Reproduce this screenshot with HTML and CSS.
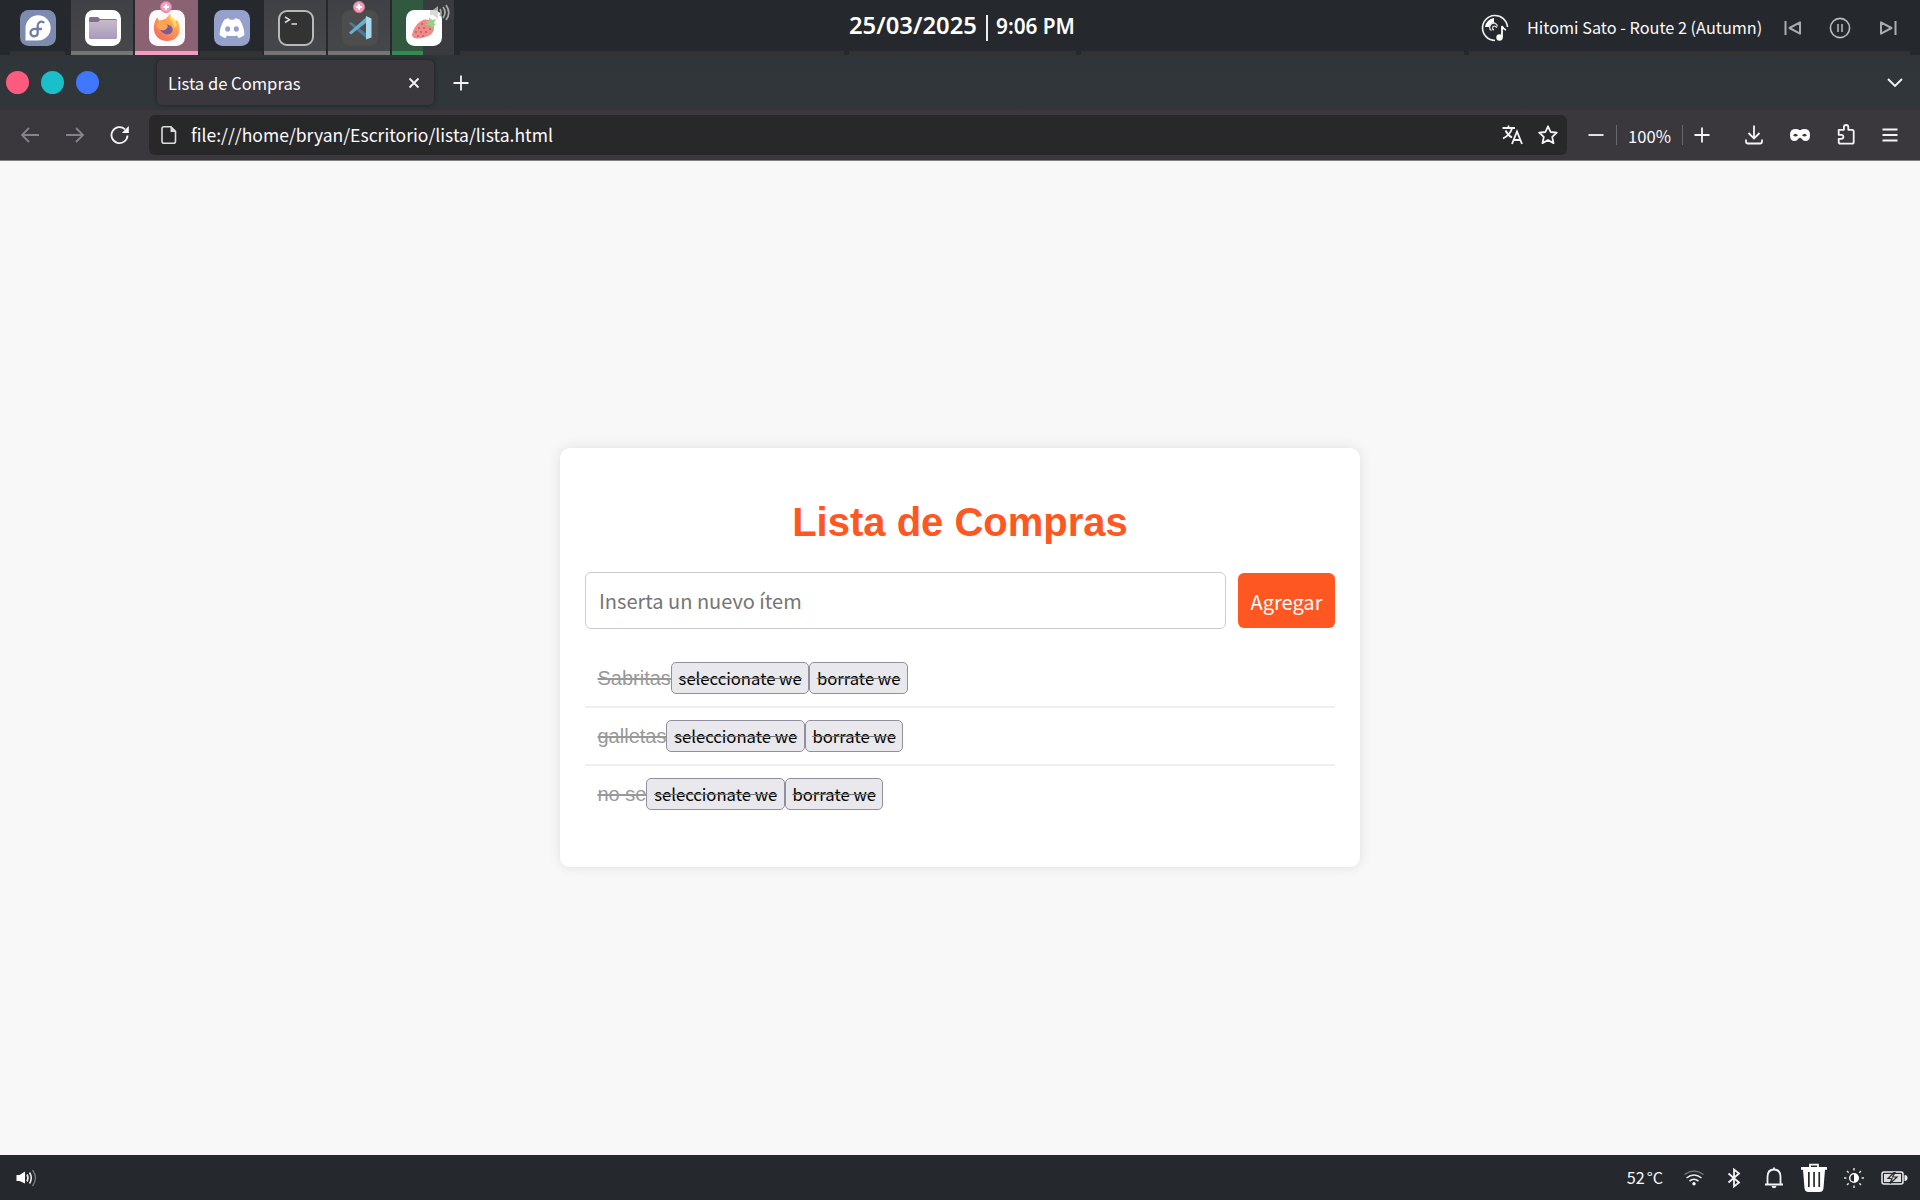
FILE: index.html
```html
<!DOCTYPE html>
<html lang="es">
<head>
<meta charset="utf-8">
<title>Lista de Compras</title>
<link rel="stylesheet" href="styles.css">
</head>
<body>
<header class="panel">
  <div class="tasks">
    <div class="task launcher">
      <svg width="36" height="36" viewBox="0 0 36 36"><rect width="36" height="36" rx="8.5" fill="#7e8bb0"/><path d="M5.5 30.5V17.8A12.6 12.6 0 1 1 18.2 30.5Z" fill="#fff"/><path d="M23.5 12.2c-3.500-1.500-5.800.6-5.800 3.800v6.200c0 5.600-7.200 5-7.200.6 0-2.900 2.600-4 5-3.800h5.500" fill="none" stroke="#707da5" stroke-width="2.300" stroke-linecap="round"/></svg>
    </div>
    <div class="task open">
      <svg width="36" height="36" viewBox="0 0 36 36"><defs><linearGradient id="fold" x2="0" y2="1"><stop stop-color="#c8bac9"/><stop offset="1" stop-color="#a99abd"/></linearGradient></defs><rect width="36" height="36" rx="8.500" fill="#fff"/><path d="M4 8.500Q4 7 5.500 7H13l2 2h15.500Q32 9 32 10.500v4H4z" fill="#826f8b"/><path d="M4 12h9l2-2h15.500Q32 10 32 11.500v16q0 1.500-1.500 1.500h-25Q4 29 4 27.500z" fill="url(#fold)"/></svg>
    </div>
    <div class="task open active">
      <i class="badge"></i>
      <svg width="36" height="36" viewBox="0 0 36 36"><defs><linearGradient id="fox" x1="1" x2=".3" y2="1"><stop stop-color="#ffd75c"/><stop offset=".5" stop-color="#fb9a51"/><stop offset="1" stop-color="#f36e62"/></linearGradient></defs><rect width="36" height="36" rx="8.500" fill="#fafafa"/><path d="M8 7.500l2.500 3.500 4-1.500 2.500-1 4-5 2 6 2.500 2 2.500-1.500c2 3 3 6.500 2.500 10.500C30 27 24.500 31 18 31 10.500 31 5 25.500 4.800 18.500 4.700 13.500 6.500 10 8 7.500z" fill="url(#fox)"/><path d="M12 16.500c3-3.500 10-2.500 11.500 2 .9 5-4.500 7.500-8.500 5-2-1.200-3-2.300-3.500-3.500l5-.5 2-2.300z" fill="#775b9d"/><path d="M8 13l4-3 5 3.500 2 3-3 3.500c-4 1-6-1-8-3z" fill="#fba451"/><path d="M21 4c-3 4 4 7 4 14l3-3-2-5-4-3z" fill="#ffd65a"/></svg>
    </div>
    <div class="task pinned">
      <svg width="36" height="36" viewBox="0 0 36 36"><rect width="36" height="36" rx="8.500" fill="#95a1cb"/><path d="M10.500 9.500q2-.9 4.500-1.200l1 1.500h4l1-1.500q2.500.3 4.500 1.200Q30 16 30.500 25q-3 2.500-6 3l-1.500-2.600q-5 1.200-10 0L11.500 28q-3-.5-6-3Q6 16 10.500 9.500z" fill="#fff"/><ellipse cx="13.700" cy="19" rx="2.500" ry="2.800" fill="#95a1cb"/><ellipse cx="22.300" cy="19" rx="2.500" ry="2.800" fill="#95a1cb"/></svg>
    </div>
    <div class="task open">
      <svg width="36" height="36" viewBox="0 0 36 36"><rect x="1" y="1" width="34" height="34" rx="8" fill="#333" stroke="#b9b9b9" stroke-width="2"/><path d="M7 7l4.500 2.700L7 12.500M13.500 14H19" fill="none" stroke="#ddd" stroke-width="1.500"/></svg>
    </div>
    <div class="task open">
      <i class="badge"></i>
      <svg width="36" height="36" viewBox="0 0 36 36"><rect width="36" height="36" rx="8.500" fill="#4d4d4d"/><path d="M7 13.500l2-1.500L25 24v5z" fill="#477c9b"/><path d="M7 22.500L9 24.500 25 12V6.500z" fill="#6badd0"/><path d="M24 6l5.500 2.500v19L24 29.500z" fill="#a9d8ee"/></svg>
    </div>
    <div class="task media">
      <svg width="36" height="36" viewBox="0 0 36 36"><rect width="36" height="36" rx="8.500" fill="#fff"/><path d="M6 25c1-6 5-12 10-14.500 5-2.500 11 .5 12 6 .8 6-4 9.500-10 11-5 1.200-11.500 2-12-2.500z" fill="#ee8b88"/><path d="M20 11l3 .5 0-4 3 2.500 4-1-2 4 2 2-3 .5 0 4-3-4-5-1 3-1z" fill="#97cf8b"/><g fill="#8e424d"><circle cx="16" cy="14" r=".8"/><circle cx="13" cy="18" r=".8"/><circle cx="18" cy="18" r=".8"/><circle cx="10" cy="22" r=".8"/><circle cx="15" cy="22" r=".8"/><circle cx="20" cy="22" r=".8"/><circle cx="24" cy="19" r=".8"/><circle cx="12" cy="26" r=".8"/><circle cx="17" cy="26" r=".8"/></g></svg>
      <svg class="sound" width="22" height="20" viewBox="0 0 22 20"><path d="M1 7h3l5-4v13l-5-4H1z" fill="#ccc" opacity=".75"/><path d="M11 6q2 3.500 0 7M14 4q4 5.500 0 11M17 2q5.500 8 0 15" fill="none" stroke="#aaa" stroke-width="1.700"/></svg>
    </div>
  </div>
  <div class="spacer first"></div>
  <div class="clock"><span class="date">25/03/2025</span><i></i><span class="time">9:06 PM</span></div>
  <div class="spacer"></div>
  <div class="player">
    <svg class="disc" width="28" height="28" viewBox="0 0 28 28"><path d="M26.500 13A12.500 12.500 0 1 0 14 26.500" fill="none" stroke="#eee" stroke-width="1.700"/><path d="M4 13A10 10 0 0 1 13 4v5.500A5 5 0 0 0 9 13z" fill="#fff"/><path d="M10.500 16.500a4 4 0 1 1 6-4M13 16a2 2 0 1 1 2.500-2" fill="none" stroke="#ddd" stroke-width="1.300"/><circle cx="18.500" cy="23.500" r="3.200" fill="#fff"/><path d="M21 23.500V12q1 3 4 4" fill="none" stroke="#fff" stroke-width="1.800"/></svg>
    <span class="track">Hitomi Sato - Route 2 (Autumn)</span>
    <svg class="prev" width="18" height="16" viewBox="0 0 18 16"><path d="M1.500 1v14M16 2.300v11.400L5.500 8z" class="dimline"/></svg>
    <svg class="pause" width="22" height="22" viewBox="0 0 22 22"><circle cx="11" cy="11" r="9.600" fill="none" stroke="#bbb" stroke-width="1.600"/><path d="M9 7v8M13 7v8" stroke="#aaa" stroke-width="1.700"/></svg>
    <svg class="next" width="18" height="16" viewBox="0 0 18 16"><path d="M16.500 1v14M2 2.300v11.400L12.500 8z" class="dimline"/></svg>
  </div>
</header>

<div class="tabbar">
  <div class="dots"><i class="close"></i><i class="min"></i><i class="max"></i></div>
  <div class="tab"><span>Lista de Compras</span>
    <svg width="12" height="12" viewBox="0 0 12 12"><path d="M1.500 1.500l9 9M10.500 1.500l-9 9" class="line"/></svg></div>
  <svg class="newtab" width="16" height="16" viewBox="0 0 16 16"><path d="M8 .5v15M.5 8h15" class="line"/></svg>
  <svg class="alltabs" width="18" height="12" viewBox="0 0 18 12"><path d="M2 2l7 7 7-7" class="line"/></svg>
</div>

<div class="toolbar">
  <svg class="nav" width="20" height="18" viewBox="0 0 20 18"><path d="M19 9H2M9 2L2 9l7 7" class="line off"/></svg>
  <svg class="nav" width="20" height="18" viewBox="0 0 20 18"><path d="M1 9h17M11 2l7 7-7 7" class="line off"/></svg>
  <svg class="nav" width="20" height="20" viewBox="0 0 20 20"><path d="M17.500 10.500A8 8 0 1 1 15 4.300" class="line"/><path d="M18.800 1v7h-7z" fill="#fbfbfe"/></svg>
  <div class="urlbar">
    <svg width="16" height="20" viewBox="0 0 16 20"><path d="M3 1.800h7l4.500 4.500v10q0 2-2 2h-9.500q-2 0-2-2V3.800q0-2 2-2z" fill="none" stroke="#ddd" stroke-width="1.600"/><path d="M9.500 1v6H15z" fill="#ddd"/></svg>
    <span class="url">file:///home/bryan/Escritorio/lista/lista.html</span>
    <svg class="translate" width="21" height="20" viewBox="0 0 21 20"><path d="M.5 3h12.500M6.500.5V3M10 3.500Q8 10 1 13.500M3.500 5.500Q6 10.500 10 12.500M10 19l5-12.500L20 19M11.800 15h6.400" class="line"/></svg>
    <svg class="star" width="20" height="20" viewBox="0 0 20 20"><path d="M10 1.300l2.600 5.700 6.200.7-4.600 4.200 1.300 6.200-5.500-3.100-5.500 3.100 1.300-6.200L1.200 7.700 7.400 7z" class="line" stroke-linejoin="round"/></svg>
  </div>
  <div class="zoom">
    <svg class="less" width="16" height="16" viewBox="0 0 16 16"><path d="M.5 8h15" class="line"/></svg>
    <span>100%</span>
    <svg class="more" width="16" height="16" viewBox="0 0 16 16"><path d="M8 .5v15M.5 8h15" class="line"/></svg>
  </div>
  <div class="actions">
    <svg width="18" height="20" viewBox="0 0 18 20"><path d="M9 .5v13M3.500 8L9 13.500 14.500 8M1 14.500v2q0 2 2 2h12q2 0 2-2v-2" class="line"/></svg>
    <svg width="20" height="14" viewBox="0 0 20 14"><path fill-rule="evenodd" d="M5 1q3 0 5 1.300Q12 1 15 1q5 0 5 6 0 6-4.500 6-2.500 0-4-2.500Q10 9 8.500 10.500 7 13 4.500 13 0 13 0 7 0 1 5 1zM3 7.300q2.500 2.600 5 0Q5.500 4.300 3 7.300zm9 0q2.500 2.600 5 0-2.500-3-5 0z" fill="#fff"/></svg>
    <svg width="18" height="21" viewBox="0 0 18 21"><path d="M1.700 5.800h5.200V3.300q0-2.300 2.200-2.300t2.200 2.300v2.500h3.700q1.700 0 1.700 1.700v10.500q0 1.700-1.700 1.700H3.400q-1.700 0-1.700-1.700v-3.200h2.500q2.200 0 2.200-2t-2.200-2H1.700z" class="line" stroke-linejoin="round"/></svg>
    <svg width="16" height="14" viewBox="0 0 16 14"><path d="M.5 1.500h15M.5 7h15M.5 12.500h15" class="line"/></svg>
  </div>
</div>

<main class="page">
  <section class="card">
    <h1>Lista de Compras</h1>
    <form class="entry">
      <input type="text" placeholder="Inserta un nuevo ítem">
      <button type="button">Agregar</button>
    </form>
    <ul class="items">
      <li><span>Sabritas</span><button class="select">seleccionate we</button><button class="remove">borrate we</button></li>
      <li><span>galletas</span><button class="select">seleccionate we</button><button class="remove">borrate we</button></li>
      <li><span>no se</span><button class="select">seleccionate we</button><button class="remove">borrate we</button></li>
    </ul>
  </section>
</main>

<footer class="tray">
  <svg class="volume" width="22" height="20" viewBox="0 0 22 20"><path d="M.5 7h3L9 3.500v12L3.500 13h-3z" fill="#fff"/><path d="M11 6.500q2 3.500 0 7M13.500 4.500q3.500 5.500 0 11" fill="none" stroke="#eee" stroke-width="1.600"/><path d="M16.500 2q6 8 0 16" fill="none" stroke="#777" stroke-width="1.400"/></svg>
  <span class="temp">52<span>°</span>C</span>
  <div class="status">
    <div><svg width="22" height="18" viewBox="0 0 22 18"><path d="M1.500 5.500Q11-1.500 20.500 5.500" fill="none" stroke="#777" stroke-width="1.500"/><path d="M3.500 9Q11 3 18.500 9M6.500 12Q11 8.500 15.500 12" fill="none" stroke="#eee" stroke-width="1.600"/><circle cx="11" cy="14.800" r="1.700" fill="#fff"/></svg></div>
    <div><svg width="14" height="20" viewBox="0 0 14 20"><path d="M1.500 5.500l10.500 9L7 18.500v-17l5 4L1.500 14.500" class="line"/></svg></div>
    <div><svg width="20" height="22" viewBox="0 0 20 22"><path d="M1 17.500h18M3.500 17.500V10q0-7.500 6.500-7.500t6.500 7.500v7.500M10 .5v2" class="line"/><path d="M7.500 19h5q-.5 2.300-2.500 2.300T7.500 19z" fill="#eee"/></svg></div>
    <div><svg width="26" height="30" viewBox="0 0 26 30"><path d="M9 5V1.700h8V5" fill="none" stroke="#fff" stroke-width="1.700"/><path fill-rule="evenodd" d="M0 4h26v2.700h-2L22.500 25q-.3 4-4 4h-11q-3.700 0-4-4L2 6.700H0zM7 9v15h1.700V9zm5.200 0v15h1.700V9zm5.200 0v15h1.700V9z" fill="#fff"/></svg></div>
    <div><svg width="20" height="20" viewBox="0 0 20 20"><circle cx="10" cy="10" r="4.300" fill="none" stroke="#eee" stroke-width="1.500"/><path d="M10 5.500a4.500 4.500 0 0 1 0 9z" fill="#fff"/><path d="M10 0v2.500M10 17.500V20M0 10h2.500M17.500 10H20M3 3l1.700 1.700M15.300 15.300L17 17M17 3l-1.700 1.700M4.700 15.300L3 17" stroke="#ddd" stroke-width="1.500"/></svg></div>
    <div><svg width="27" height="16" viewBox="0 0 27 16"><rect x="1" y="2" width="21" height="12" rx="2" fill="none" stroke="#eee" stroke-width="1.500"/><path d="M3 4h17v8H3z" fill="#ddd"/><path d="M23.500 5q3 0 3 3t-3 3z" fill="#eee"/><path d="M13 2.500l-6 6h4l-2 5 7-6.500h-4.500l2.500-4.500z" fill="#eee" stroke="#25282c" stroke-width="1.200"/></svg></div>
  </div>
</footer>
</body>
</html>
```
FILE: styles.css
```css
* { box-sizing: border-box; }
body {
  margin: 0;
  width: 1920px;
  height: 1200px;
  overflow: hidden;
  display: flex;
  flex-direction: column;
  background: #25282c;
  color: #fbfbfe;
  font-family: "Noto Sans CJK SC", "Noto Sans", sans-serif;
}
svg { display: block; flex: none; }
.line { fill: none; stroke: #f4f4f6; stroke-width: 1.8; }
.line.off { stroke: #85848a; }
.dimline { fill: none; stroke: #aaacae; stroke-width: 2; stroke-linejoin: round; }

/* Top panel */
.panel { height: 55px; display: flex; gap: 5px; background: #25282c; flex: none; }
.tasks { display: flex; gap: 2px; width: 455px; }
.task { position: relative; width: 62px; height: 55px; display: flex; justify-content: center; padding: 10px 0 0 2px; }
.launcher { width: 55px; margin: 0 4px 0 10px; padding-left: 0; border-bottom: 4px solid #333; justify-content: flex-end; }
.launcher svg { margin-right: 9px; }
.open { background: linear-gradient(#3f4144, #45474a); border-bottom: 4px solid #757674; }
.active { width: 63px; padding-left: 0; background: #8a6272; border-color: #f19dc0; }
.pinned { width: 62px; border-bottom: 4px solid #333; }
.media { background: linear-gradient(90deg, #31593f 50%, #393b3f 50%); }
.media::after { content: ""; position: absolute; left: 0; bottom: 0; width: 31px; height: 4px; background: #348a53; }
.sound { position: absolute; left: 37px; top: 3px; }
.badge {
  position: absolute; left: 25px; top: 1px; width: 12px; height: 12px; border-radius: 50%;
  border: 1px solid #de799f;
  background: linear-gradient(#fff, #fff) center/2px 6px no-repeat, linear-gradient(#fff, #fff) center/6px 2px no-repeat, #f3a0bf;
}
.spacer { width: 383px; border-bottom: 4px solid #333; }
.spacer.first { width: 384px; }
.clock { width: 227px; border-bottom: 4px solid #333; display: flex; color: #fff; font-family: "Noto Sans", sans-serif; font-weight: 600; white-space: nowrap; }
.date { width: 137px; font-size: 23.8px; line-height: 50px; }
.clock i { width: 2px; height: 26px; margin-top: 15px; background: #eee; }
.time { margin-left: 8px; font-size: 20.8px; line-height: 53px; }
.player { width: 441px; border-bottom: 4px solid #333; display: flex; align-items: center; padding: 4px 0 0 12px; }
.track { width: 257px; margin-left: 18px; padding-bottom: 2px; font-size: 16.27px; line-height: 30px; white-space: nowrap; }
.pause { margin-left: 27px; }
.next { margin-left: 28px; }

/* Browser chrome */
.tabbar { height: 55px; flex: none; background: linear-gradient(#30353a, #30363a); display: flex; align-items: center; }
.dots { display: flex; gap: 12px; padding-left: 6px; width: 157px; }
.dots i { width: 23px; height: 23px; border-radius: 50%; }
.close { background: #ff5b7f; }
.min { background: #1abfc9; }
.max { background: #3f78ff; }
.tab { width: 277px; height: 45px; border-radius: 5px; background: #3a383d; box-shadow: 0 0 4px #1e2124; display: flex; align-items: center; padding: 0 14px 0 11px; font-size: 16.6px; line-height: 30px; }
.tab svg { margin-left: auto; }
.newtab { margin-left: 19px; }
.alltabs { margin-left: auto; margin-right: 16px; }
.toolbar { height: 51px; flex: none; padding: 0 9px 1px 20px; display: flex; align-items: center; background: #3a383d; border-bottom: 1px solid #807f82; }
.nav { margin-right: 25px; }
.nav + .nav + .nav { margin-right: 19px; }
.urlbar { width: 1418px; height: 40px; border-radius: 6px; background: #28282a; display: flex; align-items: center; padding-left: 12px; }
.url { margin-left: 14px; font-size: 17.55px; line-height: 36px; }
.translate { margin-left: auto; }
.star { margin: 0 9px 0 15px; }
.zoom { display: flex; align-items: center; margin-left: 10px; }
.zoom svg { margin: 0 12px; }
.zoom .less { margin-right: 12px; margin-left: 11px; }
.zoom .more { margin-left: 11px; }
.zoom span { width: 67px; height: 20px; border: solid #68676b; border-width: 0 1px; text-align: center; font-size: 16.6px; line-height: 23px; }
.actions { display: flex; align-items: center; gap: 27px; margin-left: auto; padding-right: 13px; }

/* Shopping list page */
.page { flex: 1; padding-top: 287px; background: #f8f8f8; color: #000; font-family: "Liberation Sans", Arial, sans-serif; }
.card { width: 800px; height: 419px; margin: 0 auto; padding: 25px; border-radius: 10px; background: #fff; box-shadow: 0 0 12.5px rgba(0, 0, 0, .1); }
h1 { margin: 25px 0; font-size: 40px; line-height: 49px; text-align: center; color: #ff5722; }
.entry { display: flex; align-items: center; gap: 12px; }
.entry input { width: 641px; height: 57px; padding: 0 13px; border: 1px solid #ccc; border-radius: 6px; font: 20px "Noto Sans CJK SC", sans-serif; }
.entry input::placeholder { color: #757575; }
.entry button { width: 97px; height: 55px; padding: 1px 0 0; border: 0; border-radius: 6px; background: #ff5722; color: #fff; font: 20px "Noto Sans CJK SC", sans-serif; }
.items { margin: 21px 0 0; padding: 0; list-style: none; }
.items li { display: flex; align-items: center; height: 58px; padding: 0 12.5px; border-bottom: 2px solid #f0f0f0; color: #999; font-size: 20px; text-decoration: line-through; }
.items li:last-child { border: 0; height: 56px; }
.items button { height: 32px; padding: 0; border: 1px solid #8f8f9d; border-radius: 5px; background: #e9e9ed; color: #000; font: 16.67px/24px "Noto Sans CJK SC", sans-serif; text-decoration: line-through #777 1.3px; white-space: nowrap; }
.select { width: 138.5px; }
.remove { width: 98.5px; }

/* Bottom tray */
.tray { height: 45px; flex: none; display: flex; align-items: center; padding: 1px 6px 0 16px; background: #25282c; }
.temp { margin-left: auto; margin-right: 11px; padding-bottom: 3px; font-size: 16.2px; line-height: 30px; }
.temp span { margin-left: 2px; }
.status { display: flex; align-items: center; }
.status div { width: 40px; display: flex; justify-content: center; }
```
